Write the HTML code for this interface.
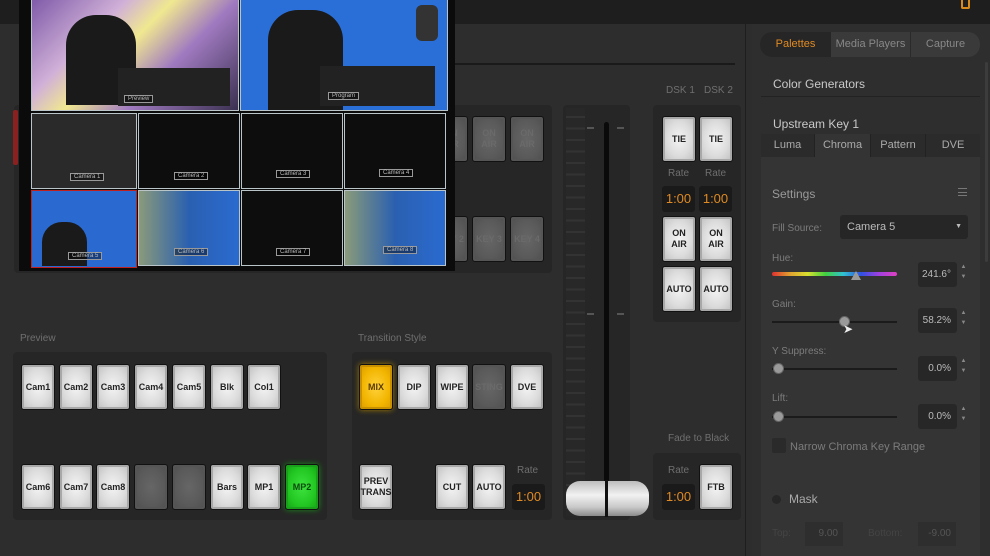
<!DOCTYPE html>
<html><head><meta charset="utf-8"><style>
*{margin:0;padding:0;box-sizing:border-box}
body{width:990px;height:556px;overflow:hidden;background:#2d2d2d;font-family:"Liberation Sans",sans-serif;position:relative}
.a{position:absolute}
.box{position:absolute;background:#262626;border-radius:4px}
.lbl{position:absolute;color:#6f6f6f;font-size:10px}
.b{position:absolute;width:34px;height:46px;border-radius:3px;background:radial-gradient(ellipse at 50% 50%,#f4f4f4 0,#dcdcdc 55%,#bdbdbd 100%);border:1px solid #111;box-shadow:inset 0 0 0 2px #a8a8a8;color:#222;font-weight:bold;font-size:9px;display:flex;align-items:center;justify-content:center;text-align:center;line-height:11px}
.b.off{background:radial-gradient(ellipse at 50% 50%,#666 0,#5a5a5a 60%,#4e4e4e 100%);box-shadow:inset 0 0 0 2px #555;color:#6a6a6a}
.b.y{background:radial-gradient(ellipse at 50% 50%,#ffd23a 0,#f2b500 60%,#d89a00 100%);box-shadow:0 0 6px #a07a00,inset 0 0 0 2px #c99000;color:#5a3a00}
.b.g{background:radial-gradient(ellipse at 50% 50%,#3ee23e 0,#22c722 60%,#14a014 100%);box-shadow:0 0 6px #1a8a1a,inset 0 0 0 2px #1aa01a;color:#0a4a0a}
.rate{position:absolute;width:33px;height:26px;background:#1a1a1a;border-radius:3px;color:#e08a22;font-size:13px;text-align:center;line-height:26px}
.cell{position:absolute;background:#0d0d0d;border:1px solid #b9c4c8}
.tag{position:absolute;border:1px solid #999;color:#bbb;font-size:6px;padding:0 3px;background:rgba(0,0,0,.4)}
.rt{color:#c9c9c9;font-size:12px}
.pl{color:#7c7c7c;font-size:10px}
.vb{position:absolute;width:39px;height:25px;background:#272727;border-radius:3px;color:#bbb;font-size:10px;text-align:right;padding-right:6px;line-height:25px}
.sp{position:absolute;width:7px;height:25px;color:#888;font-size:6px;line-height:10px;text-align:center}
.sl{position:absolute;height:2px;background:#1b1b1b;width:125px;left:772px}
.kn{position:absolute;width:11px;height:11px;border-radius:50%;background:#9a9a9a;border:1px solid #666}
</style></head><body>
<div class="a" style="left:0;top:0;width:990px;height:24px;background:#1e1e1e"></div>
<div class="a" style="left:961px;top:0;width:9px;height:9px;border:2px solid #d88a1a;border-top:none;border-radius:0 0 2px 2px"></div>
<div class="a" style="left:455px;top:63px;width:280px;height:2px;background:#1a1a1a"></div>
<div class="a" style="left:745px;top:24px;width:1px;height:532px;background:#1e1e1e"></div>

<div class="box" style="left:14px;top:105px;width:538px;height:168px"></div>
<div class="a" style="left:13px;top:110px;width:5px;height:55px;background:#8a2020;border-radius:2px"></div>
<div class="b off" style="left:434px;top:116px">ON<br>AIR</div>
<div class="b off" style="left:472px;top:116px">ON<br>AIR</div>
<div class="b off" style="left:510px;top:116px">ON<br>AIR</div>
<div class="b off" style="left:434px;top:216px">KEY 2</div>
<div class="b off" style="left:472px;top:216px">KEY 3</div>
<div class="b off" style="left:510px;top:216px">KEY 4</div>

<div class="a" style="left:19px;top:0;width:436px;height:271px;background:#0b0b0b"></div>
<div class="cell" style="left:31px;top:-2px;width:208px;height:113px;background:linear-gradient(135deg,#7e5aa8 0,#d0b0d8 30%,#f0e890 45%,#a07ac0 65%,#3a3050 100%)"></div>
<div class="a" style="left:66px;top:15px;width:70px;height:90px;background:#1a1a1a;border-radius:30px 30px 0 0"></div>
<div class="a" style="left:118px;top:68px;width:112px;height:38px;background:#222"></div>
<div class="tag" style="left:124px;top:95px">Preview</div>
<div class="cell" style="left:240px;top:-2px;width:208px;height:113px;background:#2a6fd8"></div>
<div class="a" style="left:268px;top:10px;width:75px;height:100px;background:#1a1a1a;border-radius:30px 30px 0 0"></div>
<div class="a" style="left:320px;top:66px;width:115px;height:40px;background:#222"></div>
<div class="a" style="left:416px;top:5px;width:22px;height:36px;background:#333;border-radius:6px"></div>
<div class="tag" style="left:328px;top:92px">Program</div>
<div class="cell" style="left:31px;top:113px;width:106px;height:76px;background:#2a2a2a"></div>
<div class="tag" style="left:70px;top:173px">Camera 1</div>
<div class="cell" style="left:138px;top:113px;width:102px;height:76px"></div><div class="tag" style="left:174px;top:172px">Camera 2</div>
<div class="cell" style="left:241px;top:113px;width:102px;height:76px"></div><div class="tag" style="left:276px;top:170px">Camera 3</div>
<div class="cell" style="left:344px;top:113px;width:102px;height:76px"></div><div class="tag" style="left:379px;top:169px">Camera 4</div>
<div class="cell" style="left:31px;top:190px;width:106px;height:78px;background:#2a6ad0;border-color:#c02020"></div>
<div class="a" style="left:42px;top:222px;width:45px;height:44px;background:#1a1a1a;border-radius:20px 20px 0 0"></div>
<div class="tag" style="left:68px;top:252px">Camera 5</div>
<div class="cell" style="left:138px;top:190px;width:102px;height:76px;background:linear-gradient(90deg,#8a9a7a 0,#2a60b0 50%,#2a6ad0 100%)"></div><div class="tag" style="left:174px;top:248px">Camera 6</div>
<div class="cell" style="left:241px;top:190px;width:102px;height:76px"></div><div class="tag" style="left:276px;top:248px">Camera 7</div>
<div class="cell" style="left:344px;top:190px;width:102px;height:76px;background:linear-gradient(90deg,#8a9a7a 0,#2a60b0 50%,#2a6ad0 100%)"></div><div class="tag" style="left:383px;top:246px">Camera 8</div>

<div class="lbl" style="left:20px;top:333px">Preview</div>
<div class="box" style="left:13px;top:352px;width:314px;height:168px"></div>
<div class="b" style="left:21px;top:364px">Cam1</div><div class="b" style="left:59px;top:364px">Cam2</div><div class="b" style="left:96px;top:364px">Cam3</div><div class="b" style="left:134px;top:364px">Cam4</div><div class="b" style="left:172px;top:364px">Cam5</div><div class="b" style="left:210px;top:364px">Blk</div><div class="b" style="left:247px;top:364px">Col1</div>
<div class="b" style="left:21px;top:464px">Cam6</div><div class="b" style="left:59px;top:464px">Cam7</div><div class="b" style="left:96px;top:464px">Cam8</div><div class="b off" style="left:134px;top:464px"></div><div class="b off" style="left:172px;top:464px"></div><div class="b" style="left:210px;top:464px">Bars</div><div class="b" style="left:247px;top:464px">MP1</div><div class="b g" style="left:285px;top:464px">MP2</div>

<div class="lbl" style="left:358px;top:333px">Transition Style</div>
<div class="box" style="left:352px;top:352px;width:200px;height:168px"></div>
<div class="b y" style="left:359px;top:364px">MIX</div><div class="b" style="left:397px;top:364px">DIP</div><div class="b" style="left:435px;top:364px">WIPE</div><div class="b off" style="left:472px;top:364px">STING</div><div class="b" style="left:510px;top:364px">DVE</div>
<div class="b" style="left:359px;top:464px">PREV<br>TRANS</div><div class="b" style="left:435px;top:464px">CUT</div><div class="b" style="left:472px;top:464px">AUTO</div>
<div class="lbl" style="left:517px;top:465px">Rate</div><div class="rate" style="left:512px;top:484px">1:00</div>

<div class="box" style="left:563px;top:105px;width:67px;height:415px"></div>
<div class="a" style="left:566px;top:108px;width:19px;height:408px;background:repeating-linear-gradient(180deg,#282828 0 8px,#333 8px 10px,#282828 10px 11.5px)"></div>
<div class="a" style="left:604px;top:122px;width:5px;height:395px;background:#0a0a0a;border-radius:3px"></div>
<div class="a" style="left:587px;top:127px;width:7px;height:2px;background:#555"></div><div class="a" style="left:617px;top:127px;width:7px;height:2px;background:#555"></div>
<div class="a" style="left:587px;top:313px;width:7px;height:2px;background:#555"></div><div class="a" style="left:617px;top:313px;width:7px;height:2px;background:#555"></div>
<div class="a" style="left:566px;top:481px;width:83px;height:35px;border-radius:14px;background:linear-gradient(180deg,#bdbdbd 0,#f2f2f2 40%,#c8c8c8 75%,#8a8a8a 100%)"></div>
<div class="a" style="left:605px;top:480px;width:3px;height:37px;background:#111"></div>

<div class="lbl" style="left:666px;top:85px">DSK 1</div><div class="lbl" style="left:704px;top:85px">DSK 2</div>
<div class="box" style="left:653px;top:105px;width:88px;height:217px"></div>
<div class="b" style="left:662px;top:116px">TIE</div><div class="b" style="left:699px;top:116px">TIE</div>
<div class="lbl" style="left:668px;top:168px">Rate</div><div class="lbl" style="left:705px;top:168px">Rate</div>
<div class="rate" style="left:662px;top:186px">1:00</div><div class="rate" style="left:699px;top:186px">1:00</div>
<div class="b" style="left:662px;top:216px">ON<br>AIR</div><div class="b" style="left:699px;top:216px">ON<br>AIR</div>
<div class="b" style="left:662px;top:266px">AUTO</div><div class="b" style="left:699px;top:266px">AUTO</div>

<div class="lbl" style="left:668px;top:433px">Fade to Black</div>
<div class="box" style="left:653px;top:453px;width:88px;height:67px"></div>
<div class="lbl" style="left:668px;top:465px">Rate</div><div class="rate" style="left:662px;top:484px">1:00</div>
<div class="b" style="left:699px;top:464px">FTB</div>

<div class="a" style="left:752px;top:24px;width:238px;height:532px;background:#2e2e2e"></div>
<div class="a" style="left:760px;top:32px;width:220px;height:25px;border-radius:12px;background:#3a3a3a"></div>
<div class="a" style="left:760px;top:32px;width:71px;height:25px;border-radius:12px 0 0 12px;background:#262626;color:#e08a22;font-size:11px;text-align:center;line-height:25px">Palettes</div>
<div class="a" style="left:831px;top:32px;width:80px;height:25px;color:#888;font-size:11px;text-align:center;line-height:25px;border-right:1px solid #2a2a2a">Media Players</div>
<div class="a" style="left:911px;top:32px;width:69px;height:25px;color:#888;font-size:11px;text-align:center;line-height:25px">Capture</div>
<div class="a rt" style="left:773px;top:77px">Color Generators</div>
<div class="a" style="left:761px;top:96px;width:219px;height:1px;background:#222"></div>
<div class="a rt" style="left:773px;top:117px">Upstream Key 1</div>
<div class="a" style="left:761px;top:134px;width:219px;height:422px;background:#343434"></div>
<div class="a" style="left:761px;top:134px;width:54px;height:23px;background:#2b2b2b;color:#aaa;font-size:11px;text-align:center;line-height:23px;border-right:1px solid #222">Luma</div>
<div class="a" style="left:815px;top:134px;width:55px;height:23px;color:#aaa;font-size:11px;text-align:center;line-height:23px">Chroma</div>
<div class="a" style="left:870px;top:134px;width:55px;height:23px;background:#2b2b2b;color:#aaa;font-size:11px;text-align:center;line-height:23px;border-left:1px solid #222">Pattern</div>
<div class="a" style="left:925px;top:134px;width:55px;height:23px;background:#2b2b2b;color:#aaa;font-size:11px;text-align:center;line-height:23px;border-left:1px solid #222">DVE</div>
<div class="a" style="left:772px;top:187px;color:#999;font-size:12px">Settings</div>
<div class="a" style="left:958px;top:188px;width:9px;height:8px;border-top:1px solid #777;border-bottom:1px solid #777"></div><div class="a" style="left:958px;top:192px;width:9px;height:1px;background:#777"></div>
<div class="a pl" style="left:772px;top:223px">Fill Source:</div>
<div class="a" style="left:840px;top:215px;width:128px;height:24px;background:#262626;border-radius:3px;color:#bbb;font-size:11px;line-height:24px;padding-left:7px">Camera 5<span style="position:absolute;right:6px;font-size:7px">▼</span></div>
<div class="a pl" style="left:772px;top:253px">Hue:</div>
<div class="a" style="left:772px;top:272px;width:125px;height:4px;border-radius:2px;background:linear-gradient(90deg,#e03030,#e0a030,#d8e030,#40d040,#30c0d0,#3050e0,#a040e0,#e040c0)"></div>
<div class="a" style="left:851px;top:271px;width:0;height:0;border-left:5px solid transparent;border-right:5px solid transparent;border-bottom:9px solid #999"></div>
<div class="vb" style="left:918px;top:262px">241.6°</div><div class="sp" style="left:960px;top:262px">▲<br>▼</div>
<div class="a pl" style="left:772px;top:299px">Gain:</div>
<div class="sl" style="top:321px"></div><div class="kn" style="left:839px;top:316px"></div>
<div class="a" style="left:843px;top:322px;color:#eee;font-size:12px">➤</div>
<div class="vb" style="left:918px;top:308px">58.2%</div><div class="sp" style="left:960px;top:308px">▲<br>▼</div>
<div class="a pl" style="left:772px;top:346px">Y Suppress:</div>
<div class="sl" style="top:368px"></div><div class="kn" style="left:773px;top:363px"></div>
<div class="vb" style="left:918px;top:356px">0.0%</div><div class="sp" style="left:960px;top:356px">▲<br>▼</div>
<div class="a pl" style="left:772px;top:393px">Lift:</div>
<div class="sl" style="top:416px"></div><div class="kn" style="left:773px;top:411px"></div>
<div class="vb" style="left:918px;top:404px">0.0%</div><div class="sp" style="left:960px;top:404px">▲<br>▼</div>
<div class="a" style="left:772px;top:438px;width:14px;height:15px;background:#2a2a2a;border-radius:2px"></div>
<div class="a pl" style="left:790px;top:441px;font-size:11px">Narrow Chroma Key Range</div>
<div class="a" style="left:772px;top:495px;width:9px;height:9px;border-radius:50%;background:#262626"></div>
<div class="a" style="left:789px;top:492px;color:#aaa;font-size:12px">Mask</div>
<div class="a" style="left:772px;top:528px;color:#444;font-size:10px">Top:</div>
<div class="a" style="left:805px;top:522px;width:38px;height:24px;background:#2e2e2e;color:#555;font-size:10px;line-height:24px;text-align:right;padding-right:5px">9.00</div>
<div class="a" style="left:868px;top:528px;color:#444;font-size:10px">Bottom:</div>
<div class="a" style="left:918px;top:522px;width:38px;height:24px;background:#2e2e2e;color:#555;font-size:10px;line-height:24px;text-align:right;padding-right:5px">-9.00</div>
<div class="a" style="left:985px;top:62px;width:3px;height:200px;background:#3c3c3c;border-radius:2px"></div>
</body></html>
